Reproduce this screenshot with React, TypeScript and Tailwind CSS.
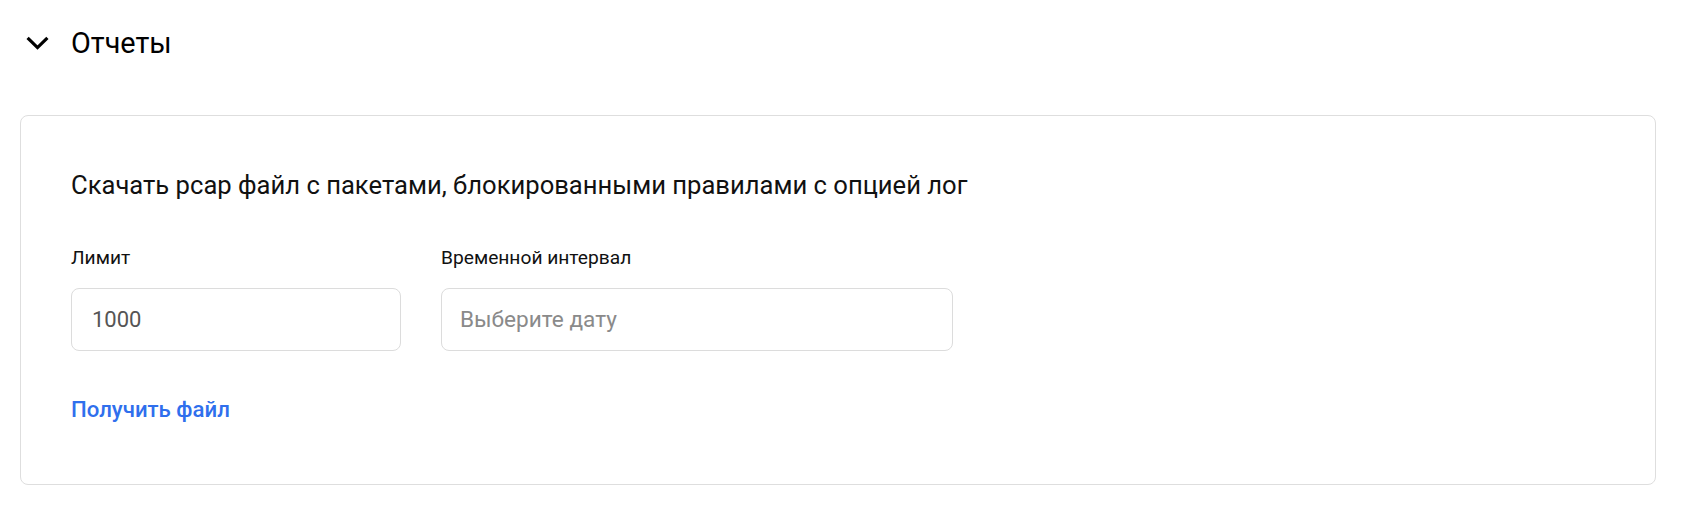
import React from "react";

const font = { fontFamily: "Roboto, 'Noto Sans', sans-serif" };

export default function App() {
	return (
		<div className="min-h-screen bg-white text-black" style={font}>
			{/* Section header */}
			<div className="flex items-center h-[86px] pl-[26px]">
				<svg width="23" height="14" viewBox="0 0 23 14" fill="none" className="shrink-0">
					<path d="M1.6 1.8 L11.5 11.6 L21.4 1.8" stroke="#000" strokeWidth="3.2" />
				</svg>
				<span className="ml-[22px] text-[28.8px] leading-none font-normal">Отчеты</span>
			</div>

			{/* Reports card */}
			<div className="ml-[20px] mr-[28px] mt-[29px] h-[370px] rounded-[8px] border border-[#dedede] pl-[50px] pt-[52px]">
				<h3 className="text-[25.6px] leading-[34px] font-normal text-[#111]">
					Скачать pcap файл с пакетами, блокированными правилами с опцией лог
				</h3>

				<div className="flex gap-[40px] mt-[43px]">
					<div className="flex flex-col">
						<label className="text-[19.2px] leading-[26px] text-[#111]">Лимит</label>
						<input
							defaultValue="1000"
							className="mt-[17px] w-[330px] h-[63px] rounded-[8px] border border-[#dcdcdc] px-[20px] text-[22px] text-[#555] outline-none"
						/>
					</div>
					<div className="flex flex-col">
						<label className="text-[19.2px] leading-[26px] text-[#111]">Временной интервал</label>
						<input
							placeholder="Выберите дату"
							className="mt-[17px] w-[512px] h-[63px] rounded-[8px] border border-[#dcdcdc] px-[18px] text-[22.6px] text-[#555] placeholder:text-[#8a8a8a] outline-none"
						/>
					</div>
				</div>

				<button className="block mt-[43px] text-[22.2px] leading-[30px] font-medium text-[#2f6fed]">
					Получить файл
				</button>
			</div>
		</div>
	);
}
